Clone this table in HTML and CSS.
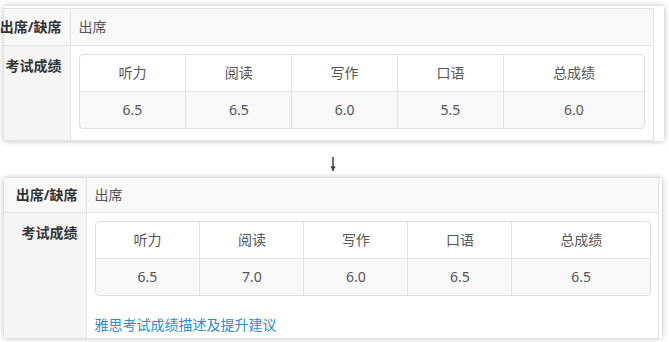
FILE: index.html
```html
<!DOCTYPE html>
<html lang="zh">
<head>
<meta charset="utf-8">
<link rel="stylesheet" href="styles.css">
</head>
<body>
<div class="page">
  <div class="panel panel-a">
    <table class="info info-a">
      <tr class="row-att">
        <th class="lbl"><div class="lbl-in">出席/缺席</div></th>
        <td class="val">出席</td>
      </tr>
      <tr class="row-score">
        <th class="lbl lbl-top"><div class="lbl-in">考试成绩</div></th>
        <td class="val val-score">
          <table class="scores">
            <colgroup><col class="cn"><col class="cn"><col class="cn"><col class="cn"><col class="cw"></colgroup>
            <tr class="hd"><td>听力</td><td>阅读</td><td>写作</td><td>口语</td><td>总成绩</td></tr>
            <tr class="dt"><td>6.5</td><td>6.5</td><td>6.0</td><td>5.5</td><td>6.0</td></tr>
          </table>
        </td>
      </tr>
    </table>
  </div>

  <div class="arrow">
    <svg class="arrow-icon" width="8" height="15" viewBox="0 0 8 15">
      <line x1="4" y1="0" x2="4" y2="14" stroke="#333" stroke-width="1.4"/>
      <path d="M1.2 9.5 L6.8 9.5 L4 13.2 Z" fill="#333"/>
    </svg>
  </div>

  <div class="panel panel-b">
    <table class="info info-b">
      <tr class="row-att">
        <th class="lbl"><div class="lbl-in">出席/缺席</div></th>
        <td class="val">出席</td>
      </tr>
      <tr class="row-score">
        <th class="lbl lbl-top"><div class="lbl-in">考试成绩</div></th>
        <td class="val val-score">
          <table class="scores">
            <colgroup><col class="cn"><col class="cn"><col class="cn"><col class="cn"><col class="cw"></colgroup>
            <tr class="hd"><td>听力</td><td>阅读</td><td>写作</td><td>口语</td><td>总成绩</td></tr>
            <tr class="dt"><td>6.5</td><td>7.0</td><td>6.0</td><td>6.5</td><td>6.5</td></tr>
          </table>
          <a class="link" href="#">雅思考试成绩描述及提升建议</a>
        </td>
      </tr>
    </table>
  </div>
</div>
</body>
</html>
```

FILE: styles.css
```css
* { box-sizing: border-box; }
html, body {
  margin: 0;
  padding: 0;
  background: #ffffff;
  width: 669px;
  height: 342px;
  overflow: hidden;
}
body {
  font-family: "Noto Sans", "Noto Sans CJK SC", sans-serif;
  font-size: 14px;
  line-height: 20px;
  color: #555;
}
.page {
  padding: 6px 0 0 4px;
}
.panel {
  background: #fff;
  box-shadow: 0 0 6px rgba(0, 0, 0, 0.28);
}
.panel-a {
  width: 660px;
  padding-top: 2px;
  padding-right: 10px;
}
.panel-b {
  width: 658px;
  margin-top: 7px;
  padding-right: 3px;
}
.info {
  border-collapse: collapse;
  table-layout: fixed;
  width: 100%;
}
.info th, .info td.val {
  border: 1px solid #e3e3e3;
  padding: 0 8px;
  text-align: left;
  vertical-align: middle;
}
.info th:first-child { border-left: none; }
.info-a th.lbl { width: 66px; }
.info-b th.lbl { width: 82px; }
.lbl {
  background: #f5f5f5;
  color: #333;
  font-weight: bold;
}
.lbl-in {
  display: flex;
  justify-content: flex-end;
  white-space: nowrap;
}
.info th.lbl-top { vertical-align: top; padding-top: 10px; }
.info .row-att td.val, .info .row-att th { background: #f8f8f8; }
.info-a .row-att { height: 37px; }
.info-b .row-att { height: 34px; }
.info-b .row-att th, .info-b .row-att td.val { border-top: none; }
.val { color: #555; }
.info-a td.val.val-score { padding: 8px 8px 11px 8px; vertical-align: top; }
.info-b td.val.val-score { padding: 8px 7px 3px 8px; vertical-align: top; }
.info-b tr:last-child th, .info-b tr:last-child td.val { border-bottom: none; }

.scores {
  width: 100%;
  table-layout: fixed;
  border-collapse: separate;
  border-spacing: 0;
  border: 1px solid #dedede;
  border-radius: 4px;
}
.scores col.cn { width: 18.75%; }
.scores col.cw { width: 25%; }
.scores td {
  text-align: center;
  color: #555;
  padding: 8px;
  border-left: 1px solid #e3e3e3;
}
.scores td:first-child { border-left: none; }
.scores .hd td {
  background: #fff;
  border-bottom: 1px solid #e3e3e3;
  height: 36px;
}
.scores .hd td:first-child { border-top-left-radius: 4px; }
.scores .hd td:last-child { border-top-right-radius: 4px; }
.scores .dt td {
  background: #f8f8f8;
  height: 35px;
}
.scores .dt td:first-child { border-bottom-left-radius: 4px; }
.scores .dt td:last-child { border-bottom-right-radius: 4px; }

.link {
  display: block;
  margin-top: 19px;
  color: #2b8bd6;
  text-decoration: none;
}

.arrow {
  height: 30px;
  width: 658px;
  display: flex;
  justify-content: center;
  align-items: flex-start;
  padding-top: 16px;
}
.arrow-icon { display: block; }
```
